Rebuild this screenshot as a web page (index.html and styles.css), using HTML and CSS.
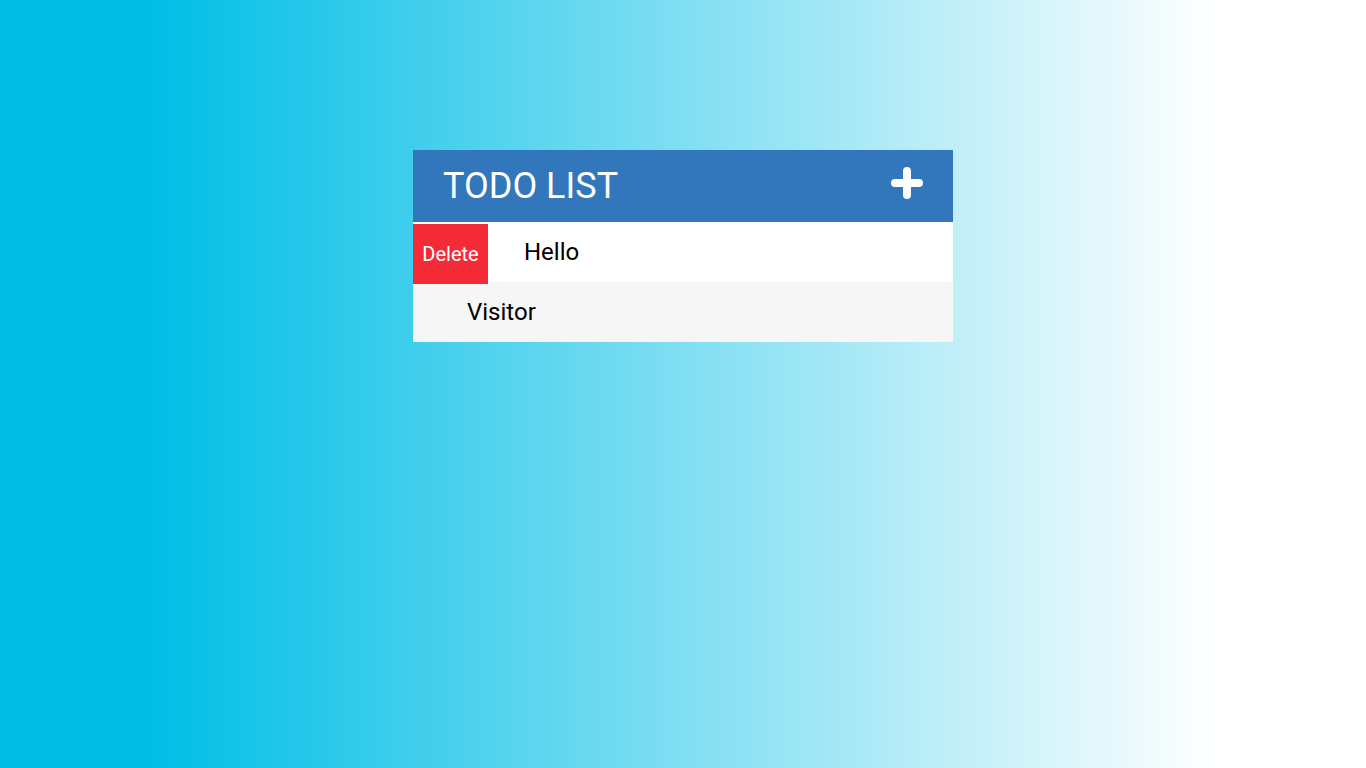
FILE: index.html
```html
<!DOCTYPE html>
<html lang="en">
<head>
<meta charset="utf-8">
<title>Todo List</title>
<link rel="stylesheet" href="styles.css">
</head>
<body>
<div class="container">
  <div class="header">
    <h1 class="title">TODO LIST</h1>
    <span class="add">
      <svg width="32" height="32" viewBox="0 0 32 32"><path d="M16 4v24M4 16h24" stroke="#fff" stroke-width="8" stroke-linecap="round" fill="none"/></svg>
    </span>
  </div>
  <ul class="list">
    <li class="item item-active"><span class="delete">Delete</span><span class="text">Hello</span></li>
    <li class="item item-alt"><span class="text">Visitor</span></li>
  </ul>
</div>
</body>
</html>
```
FILE: styles.css
```css
html, body {
  margin: 0;
  padding: 0;
  height: 100%;
}
body {
  background: linear-gradient(to right, #00bee6 11%, #ffffff 89%);
  font-family: Roboto, "Noto Sans", sans-serif;
}
.container {
  width: 540px;
  margin: 150px auto 0;
}
.header {
  height: 72px;
  background: #3276bc;
  display: flex;
  align-items: center;
  justify-content: space-between;
  padding: 0 30px;
}
.title {
  margin: 0;
  font-size: 36px;
  font-weight: 400;
  color: #fff;
  line-height: 72px;
}
.add {
  display: flex;
  margin-top: -6px;
}
.list {
  list-style: none;
  margin: 0;
  padding: 0;
}
.item {
  height: 60px;
  background: #fff;
  display: flex;
  align-items: center;
  font-size: 24px;
  color: #000;
  padding-left: 54px;
}
.item-active {
  padding-left: 0;
  align-items: flex-start;
}
.item-active .text {
  padding-left: 36px;
  line-height: 60px;
}
.item-alt {
  background: #f6f6f6;
}
.delete {
  position: relative;
  top: 2px;
  z-index: 1;
  width: 75px;
  height: 60px;
  background: #f42b37;
  color: #fff;
  font-size: 20px;
  display: flex;
  align-items: center;
  justify-content: center;
}
```
